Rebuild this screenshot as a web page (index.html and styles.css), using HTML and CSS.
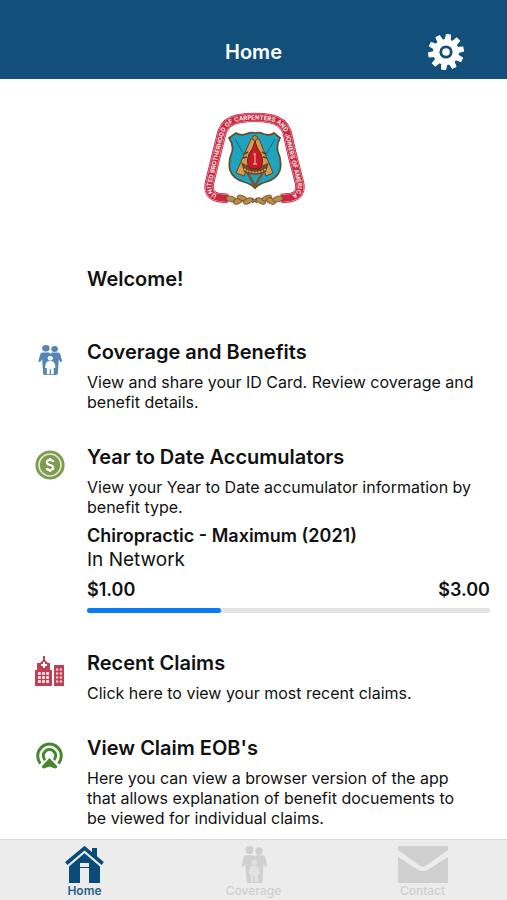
FILE: index.html
```html
<!DOCTYPE html>
<html lang="en">
<head>
<meta charset="utf-8">
<meta name="viewport" content="width=device-width, initial-scale=1">
<title>Home</title>
<link rel="stylesheet" href="styles.css">
</head>
<body>
<svg class="defs" aria-hidden="true">
  <symbol id="family" viewBox="2 0 26 36" preserveAspectRatio="none">
    <g fill="currentColor">
      <circle cx="10.500" cy="4" r="4"/>
      <circle cx="20" cy="4.800" r="3.600"/>
      <path d="M7 9H14L15.500 10.500L17 9H23C25 9 26 10 26.500 12L28 19Q28 21 26 20L24.500 17L23.500 34Q23.500 36 21.500 36H9.500Q7.500 36 7.500 34L6.500 17L4.500 20Q2.500 21 2.500 19L4.500 11Q5 9 7 9Z"/>
    </g>
    <g class="child">
      <circle cx="15.300" cy="16" r="2.800"/>
      <path d="M12.500 19.500H18Q20 20.500 21 27L19 28V35H16V29H14.600V35H11.600V28L9.500 27Q10.500 20.500 12.500 19.500Z"/>
    </g>
  </symbol>
</svg>
<div class="app">
  <header class="topbar">
    <h1 class="topbar-title">Home</h1>
    <button class="settings" type="button" aria-label="Settings">
      <svg viewBox="-18 -18 36 36" width="36" height="36">
        <g fill="#fff" transform="rotate(8)">
          <path id="tooth" d="M-3.200 -11L-2.500 -18H2.500L3.200 -11ZM-3.200 11L-2.500 18H2.500L3.200 11Z"/>
          <use href="#tooth" transform="rotate(36)"/>
          <use href="#tooth" transform="rotate(72)"/>
          <use href="#tooth" transform="rotate(108)"/>
          <use href="#tooth" transform="rotate(144)"/>
          <circle r="13"/>
        </g>
        <circle r="5.200" fill="none" stroke="#124f7b" stroke-width="2.800"/>
      </svg>
    </button>
  </header>

  <main class="content">
    <svg class="logo" viewBox="0 0 101 95" width="101" height="95" role="img" aria-label="United Brotherhood of Carpenters and Joiners of America">
      <defs>
        <path id="arch" d="M24 86.500L14 85.500Q3 83 5.500 71L12.500 42L18 20Q22 9 34 6.800Q51 4 67 6.800Q79 9 83 20L88 42L95.500 71Q98 83 87 85.500L77 86.500"/>
        <path id="lettering" d="M24 84.300L14.500 83.300Q5.500 81 7.700 71.500L14.700 42L20 21Q24 11 34.500 9Q51 6.200 66.500 9Q77 11 81 21L85.800 42L93.300 71.500Q95.500 81 86.500 83.300L77 84.300"/>
      </defs>
      <g fill="none">
        <use href="#arch" stroke="#c41f38" stroke-width="9.400"/>
        <use href="#arch" stroke="#f0b5bd" stroke-width="7.800"/>
        <use href="#arch" stroke="#c92840" stroke-width="6.800"/>
      </g>
      <text class="logo-text"><textPath href="#lettering" startOffset="50%">UNITED BROTHERHOOD OF CARPENTERS AND JOINERS OF AMERICA</textPath></text>
      <path d="M25 26L32 21Q37 24 42 22Q47 20 51 21Q55 20 60 22Q66 24 70 21L76 26Q72 33 74 40Q78 49 76 58Q73 67 62 70Q55 72 51 76Q47 72 40 70Q29 67 26 58Q24 49 28 40Q30 33 25 26Z" fill="#20a3bd" stroke="#654c2c" stroke-width="1.800"/>
      <path d="M31 27L43 48M71 27L59 48" stroke="#176f80" stroke-width="1"/>
      <path d="M43 60L51 74L59 60" fill="none" stroke="#79522b" stroke-width="2.500"/>
      <path d="M47 27H55L69 61L62 64L51 34L40 64L32 61Z" fill="#d59b52" stroke="#67431f" stroke-width="1"/>
      <path d="M37 50Q51 60 65 50L62 60Q51 66 40 60Z" fill="#704923"/>
      <path d="M40 57Q51 64 62 57" fill="none" stroke="#d9a665" stroke-width="1.500" stroke-dasharray="2 1"/>
      <path d="M51 29Q53 37 57 42Q61 52 55 57H47Q41 52 45 42Q49 37 51 29Z" fill="#c61b27" stroke="#60291b"/>
      <path d="M49 43L51 41V52M49 52H53" fill="none" stroke="#f0c8ac" stroke-width="1"/>
      <path d="M40 42L44 40M39 46L43 45M62 42L58 40M63 46L59 45" stroke="#5b391b" stroke-width="1.500"/>
      <circle cx="51" cy="26" r="2.500" fill="#c08a47" stroke="#67431f"/>
      <g fill="#b78c4c" stroke="#71512a" stroke-width=".8">
        <ellipse cx="27" cy="87" rx="5" ry="2.800" transform="rotate(12 27 87)"/>
        <ellipse cx="34" cy="89" rx="5" ry="2.800" transform="rotate(-22 34 89)"/>
        <ellipse cx="38" cy="86" rx="5" ry="2.400" transform="rotate(18 38 86)"/>
        <ellipse cx="44" cy="89" rx="5" ry="2.600" transform="rotate(-24 44 89)"/>
        <ellipse cx="57" cy="89" rx="5" ry="2.600" transform="rotate(24 57 89)"/>
        <ellipse cx="63" cy="86" rx="5" ry="2.400" transform="rotate(-18 63 86)"/>
        <ellipse cx="67" cy="89" rx="5" ry="2.800" transform="rotate(22 67 89)"/>
        <ellipse cx="74" cy="87" rx="5" ry="2.800" transform="rotate(-12 74 87)"/>
        <path d="M48 86L53 91M53 86L48 91" stroke-width="1.500"/>
      </g>
    </svg>

    <h2 class="welcome">Welcome!</h2>

    <section class="item">
      <svg class="item-icon family-blue" width="24" height="30"><use href="#family"/></svg>
      <div>
        <h2 class="item-title">Coverage and Benefits</h2>
        <p class="item-text">View and share your ID Card. Review coverage and benefit details.</p>
      </div>
    </section>

    <section class="item">
      <svg class="item-icon" viewBox="0 0 30 30" width="30" height="30">
        <circle cx="15" cy="15" r="14.600" fill="#7d9c50"/>
        <circle cx="15" cy="15" r="11" fill="none" stroke="#e3ead8" stroke-width="1.500"/>
        <path d="M18.300 12Q18 10 15 10Q11.900 10 11.900 12.200Q11.900 14.300 15 15Q18.300 15.700 18.300 17.800Q18.300 20 15 20Q12 20 11.700 18M15 8V10M15 20V22" fill="none" stroke="#fff" stroke-width="2.200"/>
      </svg>
      <div>
        <h2 class="item-title">Year to Date Accumulators</h2>
        <p class="item-text">View your Year to Date accumulator information by benefit type.</p>
        <div class="accumulator">
          <h3 class="acc-title">Chiropractic - Maximum (2021)</h3>
          <p class="acc-network">In Network</p>
          <div class="amounts"><span>$1.00</span><span>$3.00</span></div>
          <div class="track" role="progressbar" aria-label="Chiropractic maximum used" aria-valuemin="0" aria-valuemax="3" aria-valuenow="1"><div class="fill" style="width: 33.3%"></div></div>
        </div>
      </div>
    </section>

    <section class="item">
      <svg class="item-icon" viewBox="0 0 30 30" width="30" height="30">
        <path d="M0 30V14H2V7H5L8 4V0H10V4L13 7H15V14H17V30ZM19 30V9H29V30Z" fill="#bf4055"/>
        <path d="M9 6V12M6 9H12" stroke="#fff" stroke-width="2"/>
        <path d="M3 17.500H14M3 21.500H14M3 25.500H14" stroke="#fff" stroke-width="2.400" stroke-dasharray="2.800 1.300"/>
        <path d="M21 13.500H27M21 17.500H27M21 21.500H27M21 25.500H27" stroke="#f7dde0" stroke-width="2" stroke-dasharray="2.200 1.600"/>
      </svg>
      <div>
        <h2 class="item-title">Recent Claims</h2>
        <p class="item-text">Click here to view your most recent claims.</p>
      </div>
    </section>

    <section class="item">
      <svg class="item-icon" viewBox="0 0 30 30" width="30" height="30">
        <g fill="none" stroke="#46892c" stroke-width="3">
          <path d="M5.500 22.500A11.800 11.800 0 1 1 23.500 22.500"/>
          <path d="M10 19A6.200 6.200 0 1 1 19 19"/>
        </g>
        <path d="M14.500 17L22 25Q23 27.500 20 27.500L14.500 25.500L9 27.500Q6 27.500 7 25Z" fill="#46892c"/>
      </svg>
      <div>
        <h2 class="item-title">View Claim EOB's</h2>
        <p class="item-text">Here you can view a browser version of the app that allows explanation of benefit docuements to be viewed for individual claims.</p>
      </div>
    </section>
  </main>

  <nav class="tabs" aria-label="Main">
    <a class="tab active" href="#home" aria-current="page">
      <svg viewBox="0 0 39 37" width="39" height="37">
        <path d="M27 2H32V12L27 7Z" fill="#0b4b7b"/>
        <path d="M4 18L19.500 5.500L35 18V37H24V22H15V37H4Z" fill="#0b4b7b"/>
        <path d="M15 17H24V21H15Z" fill="#ececec"/>
        <path d="M2 20L19.500 5L37 20" fill="none" stroke="#ececec" stroke-width="3.500"/>
        <path d="M1.300 17.500L19.500 2.200L37.700 17.500" fill="none" stroke="#0b4b7b" stroke-width="3.600"/>
      </svg>
      Home
    </a>
    <a class="tab" href="#coverage">
      <svg class="family-gray" width="26" height="37"><use href="#family"/></svg>
      Coverage
    </a>
    <a class="tab" href="#contact">
      <svg viewBox="0 0 50 37" width="50" height="37">
        <path d="M0 0H50V4L29 19Q25 22 21 19L0 4ZM0 11L19 23Q25 27 31 23L50 11V37H0Z" fill="#d0d0d0"/>
      </svg>
      Contact
    </a>
  </nav>
</div>
</body>
</html>
```

FILE: styles.css
```css
* {
  box-sizing: border-box;
}

body,
h1,
h2,
h3,
p {
  margin: 0;
}

body {
  font-family: Inter, "Liberation Sans", sans-serif;
  color: #111;
  background: #fff;
}

.defs {
  display: none;
}

.app {
  display: flex;
  flex-direction: column;
  height: 100vh;
}

.topbar {
  display: grid;
  grid-template-columns: 1fr auto 1fr;
  align-items: center;
  padding: 26px 43px 1px;
  flex: none;
  min-height: 79px;
  color: #fff;
  background: #124f7b;
}

.topbar-title {
  grid-column: 2;
  font-size: 20px;
  line-height: 24px;
  font-weight: 600;
}

.settings {
  justify-self: end;
  display: flex;
  padding: 0;
  border: 0;
  background: none;
}

.content {
  flex: 1;
  min-height: 0;
  overflow-y: auto;
  padding: 33px 17px 8px 35px;
}

.logo {
  display: block;
  margin: 0 auto;
  position: relative;
  left: -8px;
}

.logo-text {
  font-size: 6px;
  font-weight: 600;
  text-anchor: middle;
  fill: #fff;
}

.welcome {
  margin: 60px 0 49px 52px;
  font-size: 20px;
  line-height: 24px;
  font-weight: 600;
}

.item {
  display: grid;
  grid-template-columns: 30px 1fr;
  column-gap: 22px;
  margin-bottom: 33px;
}

.item:last-child {
  margin-bottom: 0;
}

.item-icon {
  margin-top: 5px;
  justify-self: center;
}

.family-blue {
  color: #5684b4;
  fill: #fff;
}

.family-gray {
  color: #d0d0d0;
  fill: #e2e2e2;
}

.item-title {
  margin-bottom: 8px;
  font-size: 20px;
  line-height: 24px;
  font-weight: 600;
}

.item-text {
  padding-right: 14px;
  font-size: 16px;
  line-height: 20px;
}

.accumulator {
  padding: 7px 0 5px;
}

.acc-title {
  font-size: 18px;
  line-height: 24px;
  font-weight: 600;
}

.acc-network {
  font-size: 19px;
  line-height: 24px;
}

.amounts {
  display: flex;
  justify-content: space-between;
  margin: 6px 0;
  font-size: 18px;
  line-height: 24px;
  font-weight: 600;
}

.track {
  height: 5px;
  border-radius: 3px;
  background: #e3e3e4;
}

.fill {
  height: 100%;
  border-radius: 3px;
  background: #0a7af5;
}

.tabs {
  display: grid;
  grid-template-columns: repeat(3, 1fr);
  flex: none;
  border-top: 1px solid #d8d8d8;
  background: #ececec;
}

.tab {
  display: flex;
  flex-direction: column;
  align-items: center;
  padding: 6px 0 1px;
  font-size: 12px;
  line-height: 16px;
  font-weight: 500;
  color: #d0d0d0;
  text-decoration: none;
}

.tab.active {
  font-weight: 600;
  color: #2b5f8a;
}
```
